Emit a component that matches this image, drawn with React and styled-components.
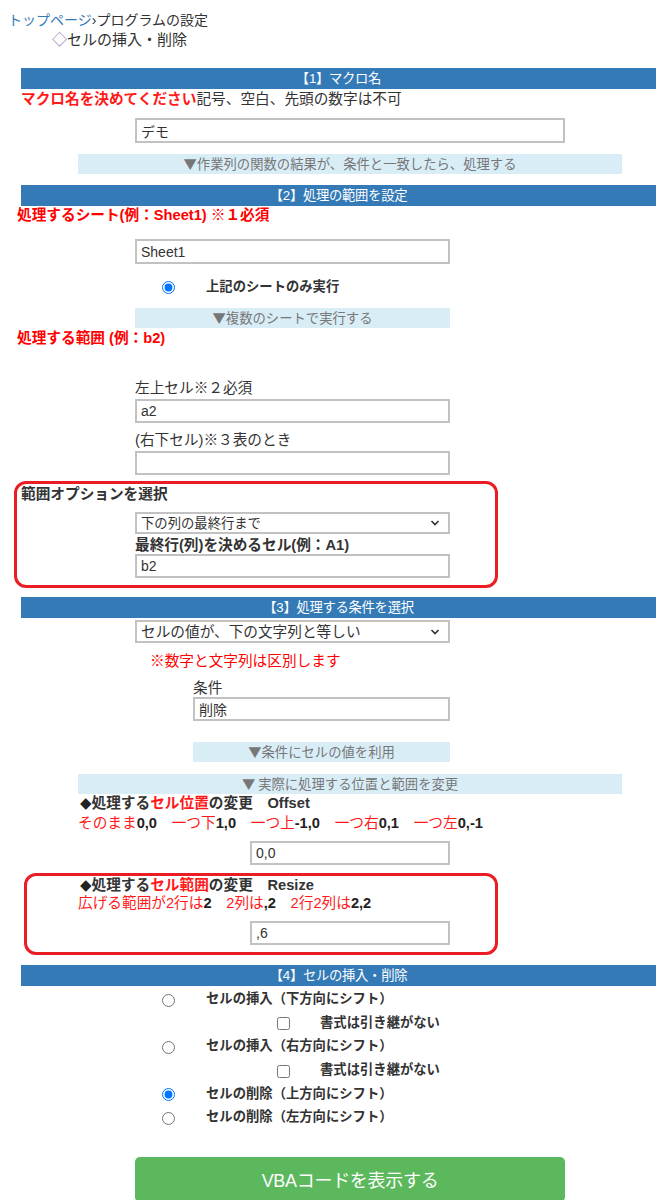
import React from 'react';
import styled, { createGlobalStyle } from 'styled-components';

const GlobalStyle = createGlobalStyle`
  body {
    margin: 0;
    background: #fff;
    color: #333;
    font-family: "Liberation Sans", "Noto Sans CJK JP", sans-serif;
    font-size: 14.67px;
  }
`;

const Page = styled.div`
  width: 656px;
  padding-top: 10px;
  overflow: hidden;
`;

const Crumbs = styled.div`
  padding-left: 8px;
  font-size: 14px;
  line-height: 20px;

  a {
    color: #337ab7;
    text-decoration: none;
  }
`;

const Title = styled.div`
  height: 20px;
  padding-left: 52px;
  font-size: 15px;
  line-height: 20px;

  span {
    color: #9a80b5;
    font-family: "Noto Sans CJK JP", sans-serif;
    line-height: 0;
  }
`;

const Section = styled.section`
  margin-left: 21px;
`;

const Bar = styled.div`
  margin-top: ${(p) => p.$mt || 0}px;
  height: 21px;
  line-height: 21px;
  background: #337ab7;
  color: #fff;
  text-align: center;
  font-size: 13.33px;
  letter-spacing: -0.3px;
`;

const InfoBar = styled.div`
  margin: ${(p) => p.$mt || 0}px 0 0 ${(p) => p.$ml || 0}px;
  width: ${(p) => p.$w}px;
  height: 20px;
  line-height: 20px;
  background: #d9edf7;
  color: #777;
  text-align: center;
  font-family: "Noto Sans CJK JP", sans-serif;
  font-size: 13.33px;
  overflow: hidden;
`;

const Line = styled.div`
  height: ${(p) => p.$lh || 18}px;
  margin: ${(p) => p.$mt || 0}px 0 0 ${(p) => p.$ml || 0}px;
  line-height: ${(p) => p.$lh || 18}px;
  font-size: ${(p) => p.$size || 14.67}px;
  font-weight: ${(p) => (p.$bold ? 700 : 400)};
  color: ${(p) => (p.$red ? '#ff0000' : '#333')};
  white-space: nowrap;
`;

const Diamond = styled.span`
  font-family: "DejaVu Sans", sans-serif;
  font-size: 15px;
  line-height: 0;
  color: #222;
`;

const Red = styled.span`
  color: #ff1a1a;
  font-weight: ${(p) => (p.$bold ? 700 : 'inherit')};
`;

const Num = styled.b`
  color: #222;
  font-weight: 700;
`;

const TextBox = styled.input`
  display: block;
  box-sizing: border-box;
  margin: ${(p) => p.$mt || 0}px 0 0 ${(p) => p.$ml || 0}px;
  width: ${(p) => p.$w}px;
  height: ${(p) => p.$h || 24}px;
  padding: 0 4px;
  border: 2px solid #c2c2c2;
  background: #fff;
  color: #333;
  font-family: "Liberation Sans", "Noto Sans CJK JP", sans-serif;
  font-size: 14px;
  outline: none;
`;

const SelectWrap = styled.div`
  position: relative;
  margin: ${(p) => p.$mt || 0}px 0 0 ${(p) => p.$ml || 0}px;
  width: ${(p) => p.$w}px;

  svg {
    position: absolute;
    right: 10px;
    top: 50%;
    transform: translateY(-50%);
    pointer-events: none;
  }
`;

const Select = styled.select`
  display: block;
  box-sizing: border-box;
  width: 100%;
  height: ${(p) => p.$h || 22}px;
  padding: 0 0 0 4px;
  appearance: none;
  border: 2px solid #c2c2c2;
  border-radius: 0;
  background: #fff;
  color: #333;
  font-family: "Liberation Sans", "Noto Sans CJK JP", sans-serif;
  font-size: ${(p) => p.$size || 13.33}px;
  outline: none;
`;

const RedBox = styled.div`
  box-sizing: border-box;
  margin: ${(p) => p.$mt || 0}px 0 0 ${(p) => p.$ml || 0}px;
  width: ${(p) => p.$w}px;
  padding: 0 0 7px 0;
  border: 3px solid #ea1c24;
  border-radius: 12px;
`;

const Option = styled.label`
  display: flex;
  align-items: center;
  height: ${(p) => p.$h || 23.6}px;
  margin-top: ${(p) => p.$mt || 0}px;
  padding-left: ${(p) => p.$indent}px;
  font-size: 13.33px;
  font-weight: 700;
  color: #333;
  white-space: nowrap;

  input {
    width: 13px;
    height: 13px;
    margin: 5px ${(p) => p.$gap}px 0 0;
    accent-color: #0075ff;
  }
`;

const Button = styled.button`
  display: block;
  margin: 29px 0 0 114px;
  width: 430px;
  height: 45px;
  border: none;
  border-radius: 5px;
  background: #5cb85c;
  color: #fff;
  font-family: "Liberation Sans", "Noto Sans CJK JP", sans-serif;
  font-size: 18px;
  letter-spacing: -0.3px;
`;

function Chevron() {
  return (
    <svg width="10" height="7" viewBox="0 0 10 7">
      <path d="M1.5 1.5 L5 5 L8.5 1.5" fill="none" stroke="#333" strokeWidth="1.6" />
    </svg>
  );
}

export default function App() {
  return (
    <Page>
      <GlobalStyle />
      <Crumbs>
        <a href="#top">トップページ</a>›プログラムの設定
      </Crumbs>
      <Title>
        <span>◇</span>セルの挿入・削除
      </Title>

      <Section>
        <Bar $mt={18}>【1】マクロ名</Bar>
        <Line $lh={20}>
          <Red $bold>マクロ名を決めてください</Red>記号、空白、先頭の数字は不可
        </Line>
        <TextBox $mt={9} $ml={114} $w={430} $h={25} defaultValue="デモ" />
        <InfoBar $mt={11} $ml={57} $w={544}>
          ▼作業列の関数の結果が、条件と一致したら、処理する
        </InfoBar>

        <Bar $mt={11}>【2】処理の範囲を設定</Bar>
        <Line $ml={-4} $red $bold>処理するシート(例：Sheet1) ※１必須</Line>
        <TextBox $mt={15} $ml={114} $w={315} $h={25} defaultValue="Sheet1" />
        <Option $h={22} $mt={10} $indent={141} $gap={31}>
          <input type="radio" name="sheet" defaultChecked />
          上記のシートのみ実行
        </Option>
        <InfoBar $mt={12} $ml={114} $w={315}>▼複数のシートで実行する</InfoBar>
        <Line $mt={1} $ml={-4} $red $bold>処理する範囲 (例：b2)</Line>
        <Line $mt={32} $ml={114}>左上セル※２必須</Line>
        <TextBox $mt={2} $ml={114} $w={315} defaultValue="a2" />
        <Line $mt={8} $ml={114}>(右下セル)※３表のとき</Line>
        <TextBox $mt={2} $ml={114} $w={315} defaultValue="" />
        <RedBox $mt={6} $ml={-7} $w={484}>
          <Line $mt={1} $ml={4} $bold>範囲オプションを選択</Line>
          <SelectWrap $mt={9} $ml={118} $w={315}>
            <Select defaultValue="last">
              <option value="last">下の列の最終行まで</option>
            </Select>
            <Chevron />
          </SelectWrap>
          <Line $mt={2} $ml={118} $bold>最終行(列)を決めるセル(例：A1)</Line>
          <TextBox $ml={118} $w={315} defaultValue="b2" />
        </RedBox>

        <Bar $mt={9}>【3】処理する条件を選択</Bar>
        <SelectWrap $mt={2} $ml={114} $w={315}>
          <Select $h={23} $size={14.67} defaultValue="eq">
            <option value="eq">セルの値が、下の文字列と等しい</option>
          </Select>
          <Chevron />
        </SelectWrap>
        <Line $mt={9} $ml={129} $red>※数字と文字列は区別します</Line>
        <Line $mt={9} $ml={172}>条件</Line>
        <TextBox $ml={172} $w={257} defaultValue="削除" />
        <InfoBar $mt={21} $ml={172} $w={257}>▼条件にセルの値を利用</InfoBar>
        <InfoBar $mt={12} $ml={57} $w={544}>▼ 実際に処理する位置と範囲を変更</InfoBar>
        <Line $ml={59} $bold>
          <Diamond>◆</Diamond>処理する<Red>セル位置</Red>の変更　Offset
        </Line>
        <Line $mt={2} $ml={57}>
          <Red>そのまま</Red><Num>0,0</Num>　<Red>一つ下</Red><Num>1,0</Num>　<Red>一つ上</Red>
          <Num>-1,0</Num>　<Red>一つ右</Red><Num>0,1</Num>　<Red>一つ左</Red><Num>0,-1</Num>
        </Line>
        <TextBox $mt={9} $ml={229} $w={200} defaultValue="0,0" />
        <RedBox $mt={8} $ml={3} $w={474}>
          <Line $ml={53} $bold>
            <Diamond>◆</Diamond>処理する<Red>セル範囲</Red>の変更　Resize
          </Line>
          <Line $ml={51}>
            <Red>広げる範囲が2行は</Red><Num>2</Num>　<Red>2列は</Red><Num>,2</Num>　<Red>2行2列は</Red>
            <Num>2,2</Num>
          </Line>
          <TextBox $mt={9} $ml={223} $w={200} defaultValue=",6" />
        </RedBox>

        <Bar $mt={10}>【4】セルの挿入・削除</Bar>
        <Option $indent={141} $gap={31}>
          <input type="radio" name="op" />
          セルの挿入（下方向にシフト）
        </Option>
        <Option $indent={256} $gap={30}>
          <input type="checkbox" />
          書式は引き継がない
        </Option>
        <Option $indent={141} $gap={31}>
          <input type="radio" name="op" />
          セルの挿入（右方向にシフト）
        </Option>
        <Option $indent={256} $gap={30}>
          <input type="checkbox" />
          書式は引き継がない
        </Option>
        <Option $indent={141} $gap={31}>
          <input type="radio" name="op" defaultChecked />
          セルの削除（上方向にシフト）
        </Option>
        <Option $indent={141} $gap={31}>
          <input type="radio" name="op" />
          セルの削除（左方向にシフト）
        </Option>
        <Button type="button">VBAコードを表示する</Button>
      </Section>
    </Page>
  );
}
